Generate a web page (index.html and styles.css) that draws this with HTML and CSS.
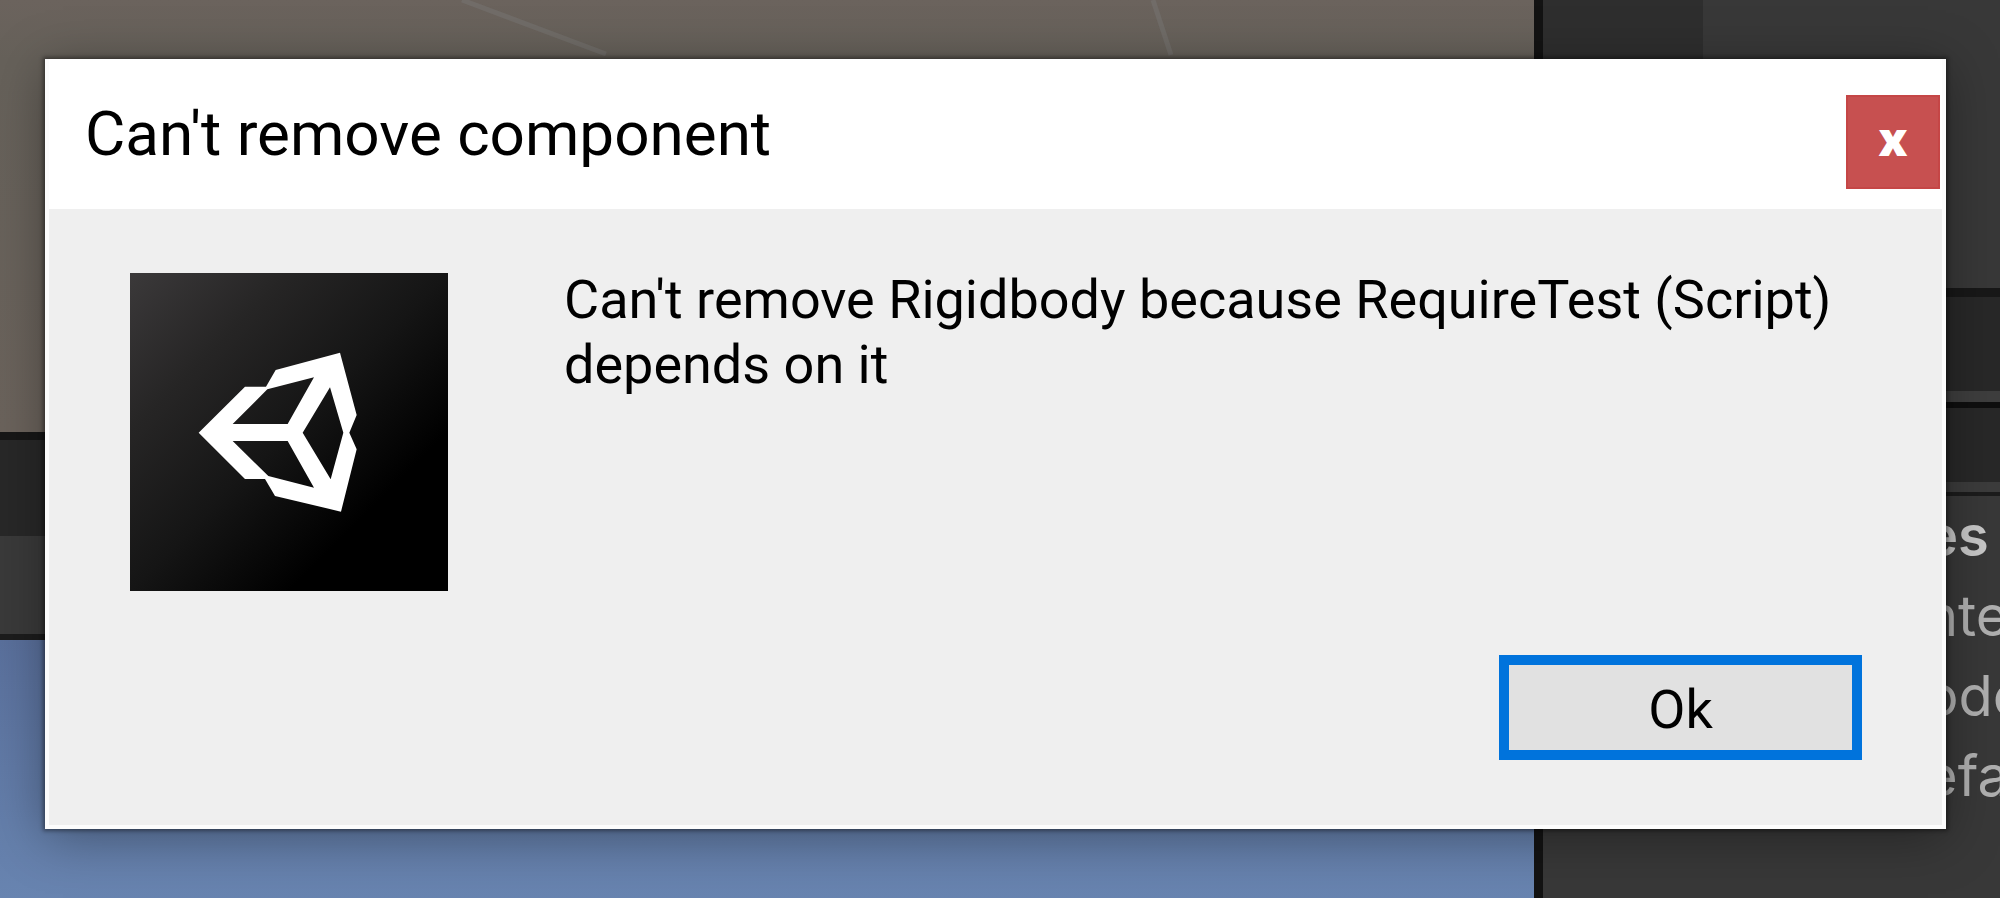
FILE: index.html
```
<!DOCTYPE html>
<html lang="en">
<head>
<meta charset="utf-8">
<title>Can't remove component</title>
<link rel="stylesheet" href="styles.css">
</head>
<body>
<div class="editor">
  <div class="views">
    <div class="scene">
      <svg class="gridlines" width="1534" height="62" viewBox="0 0 1534 62" aria-hidden="true"><path d="M462 0L606 54M1153 0L1171 55"/></svg>
    </div>
    <div class="tabs"></div>
    <div class="toolbar"></div>
    <div class="game"></div>
  </div>
  <div class="inspector">
    <div class="inspector-top"><div class="inspector-tab"></div></div>
    <div class="component-head"></div>
    <div class="component-head second"></div>
    <ul class="fields">
      <li class="field heading">es</li>
      <li class="field">nte</li>
      <li class="field">ode</li>
      <li class="field">efa</li>
    </ul>
  </div>
</div>
<section class="dialog" role="alertdialog" aria-labelledby="title" aria-describedby="message">
  <header class="titlebar">
    <h1 class="title" id="title">Can't remove component</h1>
    <button class="close" type="button" aria-label="Close">x</button>
  </header>
  <div class="content">
    <svg class="logo" viewBox="60 39 954 954" role="img" aria-label="Unity">
      <defs><linearGradient id="shade" x1="0" y1="0" x2="1" y2="1"><stop offset="0" stop-color="#3b393a"/><stop offset=".25" stop-color="#262525"/><stop offset=".5" stop-color="#151515"/><stop offset=".75" stop-color="#000"/></linearGradient></defs>
      <path fill="url(#shade)" d="M60 39H1014V993H60Z"/>
      <path fill="#fff" fill-rule="evenodd" d="M266 518L405 380H468L497 330L690 278L740 465L718 518L740 568L693 755L495 708L465 657H405ZM368 492H533L612 352L472 388ZM368 543L475 648L612 683L533 543ZM578 518L662 658L700 518L660 382Z"/>
    </svg>
    <p class="message" id="message">Can't remove Rigidbody because RequireTest (Script) depends on it</p>
  </div>
  <footer class="actions"><button class="ok" type="button">Ok</button></footer>
</section>
</body>
</html>
```
FILE: styles.css
```
* { box-sizing: border-box; }
body { margin: 0; min-height: 100vh; position: relative; overflow: hidden; font-family: Roboto, sans-serif; }

.editor { display: grid; grid-template-columns: 1fr 466px; height: 100vh; background: #383838; }
.views { display: flex; flex-direction: column; }
.scene { height: 432px; background: linear-gradient(#6b635d, #66615a 60px, #6b635c); overflow: hidden; }
.gridlines { display: block; fill: none; stroke: #77757380; stroke-width: 5; }
.tabs { height: 104px; background: #282828; border-top: 8px solid #171717; }
.toolbar { height: 104px; background: #3a3a3a; border-bottom: 6px solid #1c1c1c; }
.game { flex: 1; background: linear-gradient(#5a709c, #6884b0); }

.inspector { border-left: 9px solid #131313; background: #383838; overflow: hidden; }
.inspector-top { height: 288px; }
.inspector-tab { width: 160px; height: 100%; background: #2e2e2e; }
.component-head { height: 114px; background: #282828; border-top: 9px solid #181818; border-bottom: 11px solid #3e3e3e; }
.second { height: 90px; border-top: 6px solid #0f0f0f; border-bottom: 10px solid #3c3c3c; }
.fields { list-style: none; margin: 0; padding: 0 0 0 382px; border-top: 4px solid #1c1c1c; font-family: Inter, sans-serif; font-size: 56px; line-height: 80px; color: #b0b0b0; }
.heading { font-weight: 600; color: #c8c8c8; }

.dialog { position: absolute; top: 59px; left: 45px; right: 54px; min-height: 770px; display: flex; flex-direction: column; background: #efefef; border: 4px solid #fcfcfc; border-top: 0; box-shadow: 0 0 4px 2px rgba(0,0,0,.4), 0 8px 50px rgba(0,0,0,.35); color: #000; }
.titlebar { display: flex; justify-content: space-between; align-items: center; height: 150px; padding: 0 2px 0 36px; background: #fff; }
.title { margin: 0; font-weight: 400; font-size: 62px; line-height: 80px; }
.close { width: 94px; height: 94px; margin-top: 16px; padding: 0 0 8px; border: 2px solid #c54646; background: #c75050; color: #fff; font-family: "Open Sans", sans-serif; font-weight: 800; font-size: 46px; line-height: 80px; }
.content { display: flex; align-items: flex-start; flex: 1; gap: 116px; padding: 58px 64px 0 81px; }
.logo { flex: none; width: 318px; height: 318px; margin-top: 6px; }
.message { flex: 1; margin: 0; font-size: 54px; line-height: 65px; }
.actions { display: flex; justify-content: flex-end; padding: 0 80px 65px 0; }
.ok { width: 363px; height: 105px; padding: 4px 0 0; border: 10px solid #0073dc; background: #e1e1e1; color: #000; font-family: inherit; font-size: 54px; line-height: 65px; }
```
